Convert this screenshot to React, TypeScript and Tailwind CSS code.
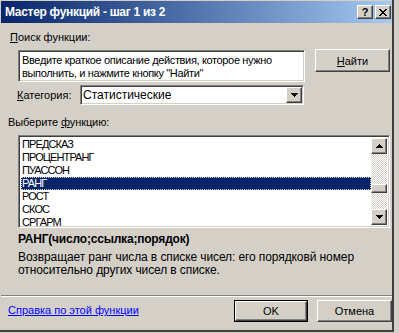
import React from 'react';

const raised =
  'border border-t-white border-l-white border-r-[#404040] border-b-[#404040] shadow-[inset_-1px_-1px_0_#808080,inset_1px_1px_0_#d4d0c8] bg-[#d4d0c8]';
const sunken =
  'border border-t-[#808080] border-l-[#808080] border-r-white border-b-white shadow-[inset_1px_1px_0_#404040,inset_-1px_-1px_0_#d4d0c8] bg-white';

const functions = ['ПРЕДСКАЗ', 'ПРОЦЕНТРАНГ', 'ПУАССОН', 'РАНГ', 'РОСТ', 'СКОС', 'СРГАРМ'];

const Arrow = ({ up }: { up?: boolean }) => (
  <svg width="7" height="4" viewBox="0 0 7 4" shapeRendering="crispEdges">
    <path d={up ? 'M3 0h1v1h1v1h1v1h1v1H0V3h1V2h1V1h1z' : 'M0 0h7v1H6v1H5v1H4v1H3V3H2V2H1V1H0z'} fill="#000" />
  </svg>
);

const App: React.FC = () => {
  return (
    <div className="w-[399px] h-[333px] bg-[#d4d0c8] font-['Liberation_Sans',Arial,sans-serif] text-[11px] text-black leading-[14px] whitespace-nowrap">
      <div className="w-[394px] h-[332px] flex flex-col border-r-2 border-b-2 border-[#404040]">
        {/* title bar */}
        <div className="mt-[1px] ml-[1px] h-[22px] flex items-center bg-linear-to-r from-[#0a246a] to-[#a6caf0] pl-[4px] pr-[1px]">
          <span className="flex-1 text-white font-bold text-[12px] tracking-[-0.3px]">Мастер функций - шаг 1 из 2</span>
          <div className={`${raised} w-[16px] h-[14px] flex items-center justify-center text-[11px] font-bold leading-none`}>?</div>
          <div className={`${raised} ml-[2px] w-[16px] h-[14px] flex items-center justify-center`}>
            <svg width="8" height="7" viewBox="0 0 8 7" shapeRendering="crispEdges">
              <path d="M0 0h2v1h1v1h2V1h1V0h2v1H7v1H6v1H5v1h1v1h1v1h1v1H6V6H5V5H3v1H2v1H0V6h1V5h1V4h1V3H2V2H1V1H0z" fill="#000" />
            </svg>
          </div>
        </div>

        <div className="flex flex-col pl-[8px]">
          <div className="mt-[7px] ml-[2px]">
            <span className="underline">П</span>оиск функции:
          </div>

          <div className="mt-[6px] ml-[10px] flex items-start">
            <div className={`${sunken} w-[287px] h-[32px] overflow-hidden pl-[3px] pt-[3px] leading-[13px] tracking-[-0.35px]`}>
              Введите краткое описание действия, которое нужно
              <br />
              выполнить, и нажмите кнопку "Найти"
            </div>
            <div className={`${raised} -mt-[1px] ml-[10px] w-[75px] h-[23px] flex items-center justify-center`}>
              <span>
                <span className="underline">Н</span>айти
              </span>
            </div>
          </div>

          <div className="mt-[3px] ml-[9px] flex items-center">
            <div className="w-[63px]">
              <span className="underline">К</span>атегория:
            </div>
            <div className={`${sunken} w-[224px] h-[20px] flex items-center pl-[2px] pr-[1px]`}>
              <span className="flex-1 text-[12px]">Статистические</span>
              <div className={`${raised} w-[16px] h-[16px] flex items-center justify-center`}>
                <Arrow />
              </div>
            </div>
          </div>

          <div className="mt-[10px] tracking-[-0.1px]">
            Выберите <span className="underline">ф</span>ункцию:
          </div>

          <div className={`${sunken} mt-[6px] ml-[10px] w-[372px] h-[93px] p-[2px] flex leading-[13px]`}>
            <div className="flex-1 flex flex-col">
              {functions.map((f) => (
                <div
                  key={f}
                  className={
                    f === 'РАНГ'
                      ? 'h-[13px] pl-[1px] tracking-[-0.9px] bg-[#0a246a] text-white outline-1 outline-dotted outline-[#d4d0c8] -outline-offset-1'
                      : 'h-[13px] pl-[1px] tracking-[-0.9px]'
                  }
                >
                  {f}
                </div>
              ))}
            </div>
            <div className="w-[16px] flex flex-col bg-[repeating-conic-gradient(#ffffff_0%_25%,#d4d0c8_0%_50%)] bg-[length:2px_2px]">
              <div className={`${raised} h-[16px] flex items-center justify-center`}>
                <Arrow up />
              </div>
              <div className="flex-1 flex flex-col pt-[30px]">
                <div className={`${raised} h-[9px]`} />
              </div>
              <div className={`${raised} h-[16px] flex items-center justify-center`}>
                <Arrow />
              </div>
            </div>
          </div>

          <div className="mt-[4px] ml-[10px] text-[12px] font-bold tracking-[-0.2px]">РАНГ(число;ссылка;порядок)</div>
          <div className="mt-[5px] ml-[10px] text-[12px] leading-[13px] tracking-[-0.1px]">
            Возвращает ранг числа в списке чисел: его порядковй номер
            <br />
            относительно других чисел в списке.
          </div>
        </div>

        <div className="mt-[18px] ml-[1px] h-[2px] border-t border-t-[#808080] border-b border-b-white" />

        <div className="mt-[3px] pl-[8px] flex items-start">
          <a href="#" className="flex-1 mt-[3px] text-[#0000ff] underline">
            Справка по этой функции
          </a>
          <div className="w-[74px] h-[22px] border border-black">
            <div className={`${raised} h-full flex items-center justify-center`}>OK</div>
          </div>
          <div className={`${raised} ml-[9px] w-[75px] h-[22px] flex items-center justify-center`}>Отмена</div>
        </div>
      </div>
    </div>
  );
};

export default App;
